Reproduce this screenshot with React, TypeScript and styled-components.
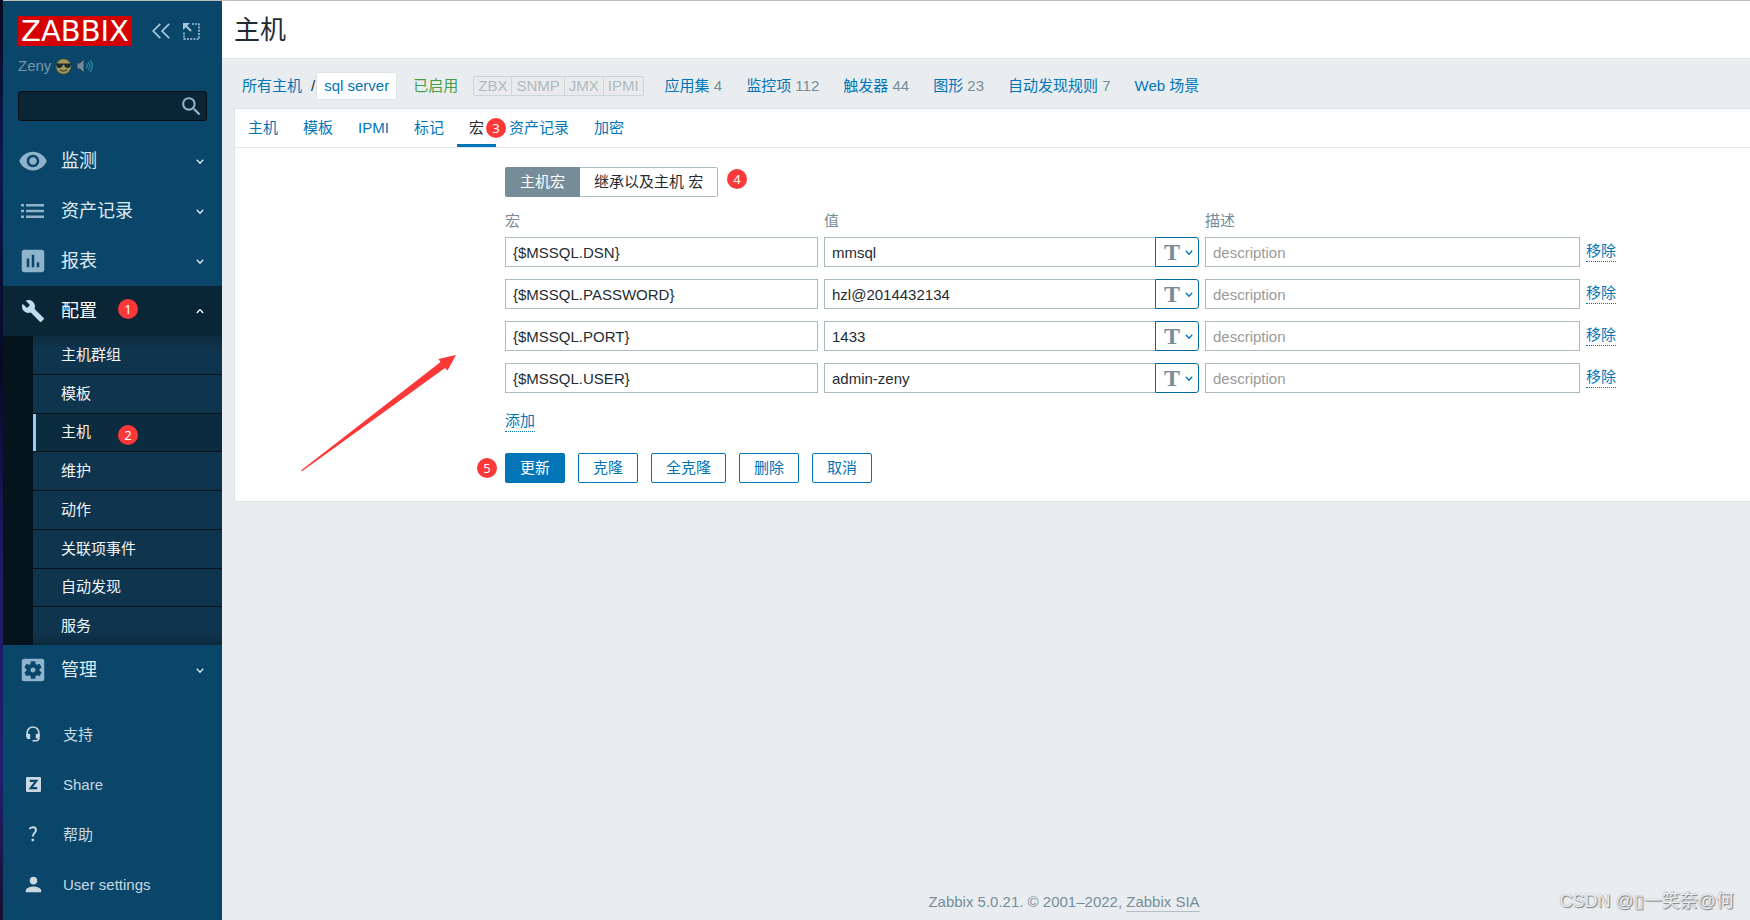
import React from "react";
import styled, { createGlobalStyle, css } from "styled-components";
import {
  MdVisibility,
  MdAssessment,
  MdBuild,
  MdSettingsApplications,
  MdSearch,
  MdPerson,
} from "react-icons/md";

const GlobalStyle = createGlobalStyle`
  *, *::before, *::after { box-sizing: border-box; }
  body {
    margin: 0;
    background: #e9edf0;
    color: #1f2c33;
    font: 15px/20px "Liberation Sans", "Noto Sans CJK SC", sans-serif;
  }
  a { color: inherit; text-decoration: none; }
  button, input { font: inherit; color: inherit; }
  ul { list-style: none; margin: 0; padding: 0; }
`;

const Desktop = styled.div`
  display: flex;
  min-height: 100vh;
  background: linear-gradient(#06091f, #0c1852 18%, #050a24 40%, #1d1a66 60%, #231c6c 85%, #14102e);
  padding-left: 3px;
`;

const Window = styled.div`
  flex: 1;
  display: flex;
  min-width: 0;
  border-top: 1px solid #bdbdbd;
  background: #e9edf0;
`;

/* Sidebar */

const Sidebar = styled.aside`
  flex: none;
  width: 219px;
  display: flex;
  flex-direction: column;
  background: #0a466a;
  color: #e0ebf1;
`;

const SidebarHead = styled.div`
  padding: 15px 15px 15px;
`;

const LogoRow = styled.div`
  display: flex;
  align-items: center;
  gap: 13px;
`;

const Logo = styled.a`
  flex: none;
  width: 114px;
  height: 30px;
  margin-right: 7px;
  background: #d40000;
  color: #fff;
  font: 29px/30px "DejaVu Sans", sans-serif;
  text-align: center;
`;

const IconButton = styled.button`
  flex: none;
  display: flex;
  padding: 0;
  border: 0;
  background: none;
  color: #a9c7da;
`;

const UserName = styled.div`
  display: flex;
  align-items: center;
  gap: 4px;
  margin-top: 10px;
  color: #7894a8;
`;

const Search = styled.form`
  display: flex;
  align-items: center;
  height: 30px;
  margin-top: 15px;
  padding-right: 2px;
  border: 1px solid #020c13;
  border-radius: 3px;
  background: #092536;

  input {
    flex: 1;
    min-width: 0;
    padding: 0 8px;
    border: 0;
    outline: 0;
    background: none;
  }
  button { color: #8fb3ca; }
`;

const NavLink = styled.a<{ $open?: boolean }>`
  position: relative;
  display: flex;
  align-items: center;
  height: 50px;
  padding-right: 18px;
  font-size: 18px;
  color: ${(p) => (p.$open ? "#fff" : "#e0ebf1")};
  background: ${(p) => (p.$open ? "#0a2536" : "none")};
`;

const NavIcon = styled.span<{ $open?: boolean }>`
  flex: none;
  width: 58px;
  padding-left: 1px;
  display: flex;
  justify-content: center;
  color: ${(p) => (p.$open ? "#bfdcf0" : "#8fb3ca")};
`;

const NavLabel = styled.span`
  flex: 1;
`;

const SubMenu = styled.ul`
  display: grid;
  grid-template-rows: repeat(8, 1fr);
  gap: 1px;
  height: 309px;
  padding-left: 30px;
  background: #04131c;
`;

const SubLink = styled.a<{ $active?: boolean }>`
  position: relative;
  display: flex;
  align-items: center;
  height: 100%;
  padding-left: 25px;
  border-left: 3px solid ${(p) => (p.$active ? "#8fd0fb" : "#0f344d")};
  background: ${(p) => (p.$active ? "#0b2b3f" : "#0f344d")};
  color: #f2f6f8;
`;

const SubItem = styled.li`
  &:first-child ${SubLink} {
    border-left: 0;
    padding-left: 28px;
    background: linear-gradient(#0c2a3d, #0f344d 12px);
  }
  &:last-child ${SubLink} {
    border-left: 0;
    padding-left: 28px;
    background: linear-gradient(#0f344d 26px, #0c2a3d);
  }
`;

const FootNav = styled.ul`
  margin-top: auto;
  padding-bottom: 10px;
`;

const FootLink = styled.a`
  display: flex;
  align-items: center;
  height: 50px;
  color: #c9d8e1;
`;

const FootIcon = styled.span`
  width: 60px;
  padding-bottom: 2px;
  display: flex;
  justify-content: center;
`;

/* Numbered step markers laid over the page */

const Marker = styled.span<{ $x: number; $y: number }>`
  position: absolute;
  left: ${(p) => p.$x}px;
  top: ${(p) => p.$y}px;
  z-index: 2;
  width: 20px;
  height: 20px;
  border-radius: 50%;
  background: #fd3838;
  color: #fff;
  font: 13px/20px "Noto Sans", sans-serif;
  text-align: center;
`;

/* Content */

const Main = styled.main`
  flex: 1;
  min-width: 0;
  display: flex;
  flex-direction: column;
`;

const PageHeader = styled.header`
  height: 58px;
  padding: 0 12px;
  border-bottom: 1px solid #dfe4e7;
  background: #fff;

  h1 {
    margin: 0;
    font-size: 26px;
    line-height: 58px;
    font-weight: 400;
  }
`;

const ObjectBar = styled.nav`
  display: flex;
  align-items: center;
  height: 49px;
  padding: 4px 21px 0 20px;
  white-space: nowrap;
`;

const Crumb = styled.a`
  color: #0275b8;
`;

const Slash = styled.span`
  margin-left: 9px;
`;

const CurrentHost = styled.a`
  margin: 0 16px 0 1px;
  padding: 3px 7px;
  border: 1px solid #dfe4e7;
  border-radius: 2px;
  background: #fff;
  color: #0275b8;
`;

const Status = styled.a`
  color: #429e47;
`;

const Interfaces = styled.div`
  display: flex;
  margin: 0 21px 0 15px;
  border: 1px solid #ccd5d9;
  border-radius: 2px;
  background: #ebebeb;
  color: #adbbc2;
  line-height: 18px;

  span { padding: 0 4px; }
  span + span { border-left: 1px solid #ccd5d9; }
`;

const Counted = styled.span`
  margin-right: 24px;
  color: #768d99;
`;

const Panel = styled.section`
  position: relative;
  margin-left: 12px;
  border: 1px solid #dfe4e7;
  border-right: 0;
  background: #fff;
`;

const Tabs = styled.ul`
  display: flex;
  gap: 1px;
  height: 39px;
  padding-left: 1px;
  border-bottom: 1px solid #e4e8eb;
`;

const Tab = styled.li<{ $active?: boolean }>`
  position: relative;
  height: 38px;
  padding: 9px 12px 0;
  color: ${(p) => (p.$active ? "#1f2c33" : "#0275b8")};
  ${(p) =>
    p.$active &&
    css`
      border-bottom: 3px solid #0275b8;
    `}
`;

const FormBody = styled.form`
  padding: 19px 10px 18px 270px;
`;

const Segmented = styled.div`
  position: relative;
  display: inline-flex;
  vertical-align: top;

  label {
    display: flex;
    align-items: center;
    height: 30px;
    padding: 0 14px;
    border: 1px solid #acbbc2;
    border-radius: 0 2px 2px 0;
    cursor: pointer;
  }
  label:first-of-type { padding-right: 15px; border-right: 0; border-radius: 2px 0 0 2px; }
  label:last-of-type { border-left: 0; }
  input { position: absolute; opacity: 0; pointer-events: none; margin: 0; }
  input:checked + label { background: #768d99; border-color: #768d99; color: #fff; }
`;

const MacroTable = styled.table`
  border-collapse: collapse;

  th {
    height: 40px;
    padding: 11px 6px 3px 0;
    line-height: 26px;
    font-weight: 400;
    text-align: left;
    color: #768d99;
  }
  td { height: 42px; padding: 0 6px 12px 0; vertical-align: top; }
`;

const TextBox = styled.input<{ $w: number }>`
  display: block;
  width: ${(p) => p.$w}px;
  height: 30px;
  padding: 0 7px;
  border: 1px solid #acbbc2;
  border-radius: 0;
  background: #fff;
  outline: 0;

  &::placeholder { color: #9a9a9a; opacity: 1; }
`;

const ValueCell = styled.div`
  display: flex;

  ${TextBox} { border-right: 0; }
`;

const TypeButton = styled.button`
  display: flex;
  align-items: center;
  justify-content: space-between;
  width: 44px;
  height: 30px;
  padding: 0 5px 0 8px;
  border: 1px solid #0269a4;
  border-radius: 0 3px 3px 0;
  background: #fff;
  color: #0275b8;
`;

const TypeGlyph = styled.span`
  color: #768d99;
  font: bold 24px/28px "Liberation Serif", serif;
`;

const LinkButton = styled.button`
  display: block;
  padding: 0;
  border: 0;
  border-bottom: 1px dotted #0275b8;
  background: none;
  color: #0275b8;
  line-height: 20px;
`;

const RemoveWrap = styled.div`
  padding-top: 4px;
`;

const AddWrap = styled.div`
  padding-top: 6px;
`;

const Actions = styled.div`
  position: relative;
  display: flex;
  gap: 13px;
  margin-top: 21px;
`;

const Button = styled.button<{ $primary?: boolean }>`
  height: 30px;
  padding: 0 14px;
  border: 1px solid #0275b8;
  border-radius: 2px;
  background: ${(p) => (p.$primary ? "#0275b8" : "#fff")};
  color: ${(p) => (p.$primary ? "#fff" : "#0275b8")};
`;

const Arrow = styled.svg`
  position: absolute;
  left: 65px;
  top: 244px;
`;

const PageFooter = styled.footer`
  position: relative;
  margin-top: auto;
  padding: 0 0 8px 156px;
  text-align: center;
  color: #768d99;

  a { display: inline-block; border-bottom: 1px solid #b4bfc5; line-height: 18px; }
`;

const Watermark = styled.span`
  position: absolute;
  right: 16px;
  bottom: 7px;
  font-size: 18px;
  line-height: 24px;
  color: #eceeef;
  text-shadow: 1px 1px 1px #7d7d7d, 0 0 1px #8a8a8a;
`;

const Caret = ({ up = false }: { up?: boolean }) => (
  <svg width="8" height="8" viewBox="0 0 8 8" fill="none" stroke="currentColor" strokeWidth="1.3">
    <path d={up ? "M.8 6 4 2.600 7.200 6" : "M.8 2.800 4 6.200 7.200 2.800"} />
  </svg>
);

const ListIcon = () => (
  <svg width="23" height="14" viewBox="0 0 23 14" fill="currentColor">
    <path d="M0 0h3v2.500H0zM5 0h18v2.500H5zM0 5.700h3v2.500H0zM5 5.700h18v2.500H5zM0 11.400h3v2.500H0zM5 11.400h18v2.500H5z" />
  </svg>
);

const HeadsetIcon = () => (
  <svg width="14" height="16" viewBox="0 0 14 16" fill="none" stroke="currentColor">
    <path d="M1.200 11V6.600a5.800 5.600 0 0 1 11.600 0V11" strokeWidth="1.700" />
    <path d="M.4 8h3.800v5H2.400a2 2 0 0 1-2-2zM9.800 8h3.800v4.500H9.800z" fill="currentColor" stroke="none" />
    <path d="M12.900 12q0 2.700-3 2.700H6.500" strokeWidth="1.500" />
  </svg>
);

const ShareIcon = () => (
  <svg width="15" height="15" viewBox="0 0 15 15">
    <rect width="15" height="15" rx="1" fill="currentColor" />
    <path d="M3.800 3.900h6.500L4.800 11.200H11.200" fill="none" stroke="#0a466a" strokeWidth="2.200" />
  </svg>
);

const HelpIcon = () => (
  <svg width="10" height="16" viewBox="0 0 10 16" fill="none" stroke="currentColor" strokeWidth="2">
    <path d="M1.500 3.200C2.600.6 8 .5 8 4c0 2.800-3.200 3-3.200 6.500" />
    <path d="M3.600 14h2.400" strokeWidth="2.400" />
  </svg>
);

const CollapseIcon = () => (
  <svg width="18" height="16" viewBox="0 0 18 16" fill="none" stroke="currentColor" strokeWidth="1.700">
    <path d="M8.300.8 1.200 8l7.100 7.200M17.200.8 10.100 8l7.100 7.200" />
  </svg>
);

const KioskIcon = () => (
  <svg width="17" height="17" viewBox="0 0 17 17" fill="none" stroke="currentColor" strokeWidth="1.500">
    <path d="M9 1h7v15H1V9" strokeDasharray="2 1.200" />
    <path d="M2 2l6 6" strokeWidth="2" />
    <path d="M0 0h7L0 7z" fill="currentColor" stroke="none" />
  </svg>
);

const CoolFace = () => (
  <svg width="17" height="17" viewBox="0 0 17 17">
    <circle cx="8.500" cy="8.500" r="7.700" fill="#a3975a" stroke="#3b4a45" strokeWidth="1" />
    <path d="M1 5.500h15l-.8 3.200q-2.700 2.600-5.200 0l-1-2H8l-1 2q-2.500 2.600-5.200 0z" fill="#172c38" />
    <path d="M5 11.800q3.500 2.600 7 0" fill="none" stroke="#3b3f2d" strokeWidth="1.200" />
  </svg>
);

const Speaker = () => (
  <svg width="17" height="16" viewBox="0 0 17 16">
    <path d="M1 5h3l4-4v14l-4-4H1z" fill="#74899a" stroke="#243f50" />
    <path d="M10.500 5.500q1.500 2.500 0 5M12.300 3.800q3 4.200 0 8.400M14.300 2.200q3.800 5.800 0 11.600" fill="none" stroke="#2487ad" strokeWidth="1.200" />
  </svg>
);

const sections = [
  { label: "监测", icon: <MdVisibility size={30} /> },
  { label: "资产记录", icon: <ListIcon /> },
  { label: "报表", icon: <MdAssessment size={30} /> },
];

const subItems = ["主机群组", "模板", "主机", "维护", "动作", "关联项事件", "自动发现", "服务"];

const footItems = [
  { label: "支持", icon: <HeadsetIcon /> },
  { label: "Share", icon: <ShareIcon /> },
  { label: "帮助", icon: <HelpIcon /> },
  { label: "User settings", icon: <MdPerson size={23} /> },
];

const counters: [string, string][] = [
  ["应用集", "4"],
  ["监控项", "112"],
  ["触发器", "44"],
  ["图形", "23"],
  ["自动发现规则", "7"],
];

const tabs = ["主机", "模板", "IPMI", "标记", "宏", "资产记录", "加密"];

const macros: [string, string][] = [
  ["{$MSSQL.DSN}", "mmsql"],
  ["{$MSSQL.PASSWORD}", "hzl@2014432134"],
  ["{$MSSQL.PORT}", "1433"],
  ["{$MSSQL.USER}", "admin-zeny"],
];

export default function App() {
  return (
    <>
      <GlobalStyle />
      <Desktop>
        <Window>
          <Sidebar>
            <SidebarHead>
              <LogoRow>
                <Logo href="#">ZABBIX</Logo>
                <IconButton type="button" aria-label="Collapse sidebar">
                  <CollapseIcon />
                </IconButton>
                <IconButton type="button" aria-label="Kiosk mode">
                  <KioskIcon />
                </IconButton>
              </LogoRow>
              <UserName>
                <span>Zeny</span>
                <CoolFace />
                <Speaker />
              </UserName>
              <Search>
                <input type="text" aria-label="Search" />
                <IconButton type="button" aria-label="Run search">
                  <MdSearch size={25} />
                </IconButton>
              </Search>
            </SidebarHead>

            <nav>
              {sections.map((s) => (
                <NavLink href="#" key={s.label}>
                  <NavIcon>{s.icon}</NavIcon>
                  <NavLabel>{s.label}</NavLabel>
                  <Caret />
                </NavLink>
              ))}
              <NavLink href="#" $open>
                <NavIcon $open>
                  <MdBuild size={24} />
                </NavIcon>
                <NavLabel>配置</NavLabel>
                <Caret up />
                <Marker $x={115} $y={13}>1</Marker>
              </NavLink>
              <SubMenu>
                {subItems.map((label) => (
                  <SubItem key={label}>
                    <SubLink href="#" $active={label === "主机"}>
                      {label}
                      {label === "主机" && <Marker $x={82} $y={11}>2</Marker>}
                    </SubLink>
                  </SubItem>
                ))}
              </SubMenu>
              <NavLink href="#">
                <NavIcon>
                  <MdSettingsApplications size={30} />
                </NavIcon>
                <NavLabel>管理</NavLabel>
                <Caret />
              </NavLink>
            </nav>

            <FootNav>
              {footItems.map((f) => (
                <li key={f.label}>
                  <FootLink href="#">
                    <FootIcon>{f.icon}</FootIcon>
                    {f.label}
                  </FootLink>
                </li>
              ))}
            </FootNav>
          </Sidebar>

          <Main>
            <PageHeader>
              <h1>主机</h1>
            </PageHeader>

            <ObjectBar>
              <Crumb href="#">所有主机</Crumb>
              <Slash>/</Slash>
              <CurrentHost href="#">sql server</CurrentHost>
              <Status href="#">已启用</Status>
              <Interfaces>
                <span>ZBX</span>
                <span>SNMP</span>
                <span>JMX</span>
                <span>IPMI</span>
              </Interfaces>
              {counters.map(([label, count]) => (
                <Counted key={label}>
                  <Crumb href="#">{label}</Crumb> {count}
                </Counted>
              ))}
              <Crumb href="#">Web 场景</Crumb>
            </ObjectBar>

            <Panel>
              <Tabs>
                {tabs.map((label) => (
                  <Tab key={label} $active={label === "宏"}>
                    <a href="#">{label}</a>
                    {label === "宏" && <Marker $x={29} $y={9}>3</Marker>}
                  </Tab>
                ))}
              </Tabs>

              <FormBody>
                <Segmented>
                  <input type="radio" name="scope" id="scope-host" defaultChecked />
                  <label htmlFor="scope-host">主机宏</label>
                  <input type="radio" name="scope" id="scope-all" />
                  <label htmlFor="scope-all">继承以及主机 宏</label>
                  <Marker $x={222} $y={2}>4</Marker>
                </Segmented>

                <MacroTable>
                  <thead>
                    <tr>
                      <th>宏</th>
                      <th>值</th>
                      <th>描述</th>
                      <th aria-label="操作" />
                    </tr>
                  </thead>
                  <tbody>
                    {macros.map(([macro, value]) => (
                      <tr key={macro}>
                        <td>
                          <TextBox $w={313} aria-label="宏" defaultValue={macro} />
                        </td>
                        <td>
                          <ValueCell>
                            <TextBox $w={331} aria-label="值" defaultValue={value} />
                            <TypeButton type="button" aria-label="值类型">
                              <TypeGlyph>T</TypeGlyph>
                              <Caret />
                            </TypeButton>
                          </ValueCell>
                        </td>
                        <td>
                          <TextBox $w={375} aria-label="描述" placeholder="description" />
                        </td>
                        <td>
                          <RemoveWrap>
                            <LinkButton type="button">移除</LinkButton>
                          </RemoveWrap>
                        </td>
                      </tr>
                    ))}
                  </tbody>
                </MacroTable>
                <AddWrap>
                  <LinkButton type="button">添加</LinkButton>
                </AddWrap>

                <Actions>
                  <Marker $x={-28} $y={5}>5</Marker>
                  <Button type="button" $primary>更新</Button>
                  <Button type="button">克隆</Button>
                  <Button type="button">全克隆</Button>
                  <Button type="button">删除</Button>
                  <Button type="button">取消</Button>
                </Actions>
              </FormBody>

              <Arrow width="158" height="120" viewBox="0 0 158 120" aria-hidden="true">
                <path d="M1 117.500 140.500 9l-2-3 17.500-4-8.500 15.500-2.500-2.500L2 118.300z" fill="#fd3838" />
              </Arrow>
            </Panel>

            <PageFooter>
              Zabbix 5.0.21. © 2001–2022, <a href="#">Zabbix SIA</a>
              <Watermark>CSDN @▯一笑奈@何</Watermark>
            </PageFooter>
          </Main>
        </Window>
      </Desktop>
    </>
  );
}
